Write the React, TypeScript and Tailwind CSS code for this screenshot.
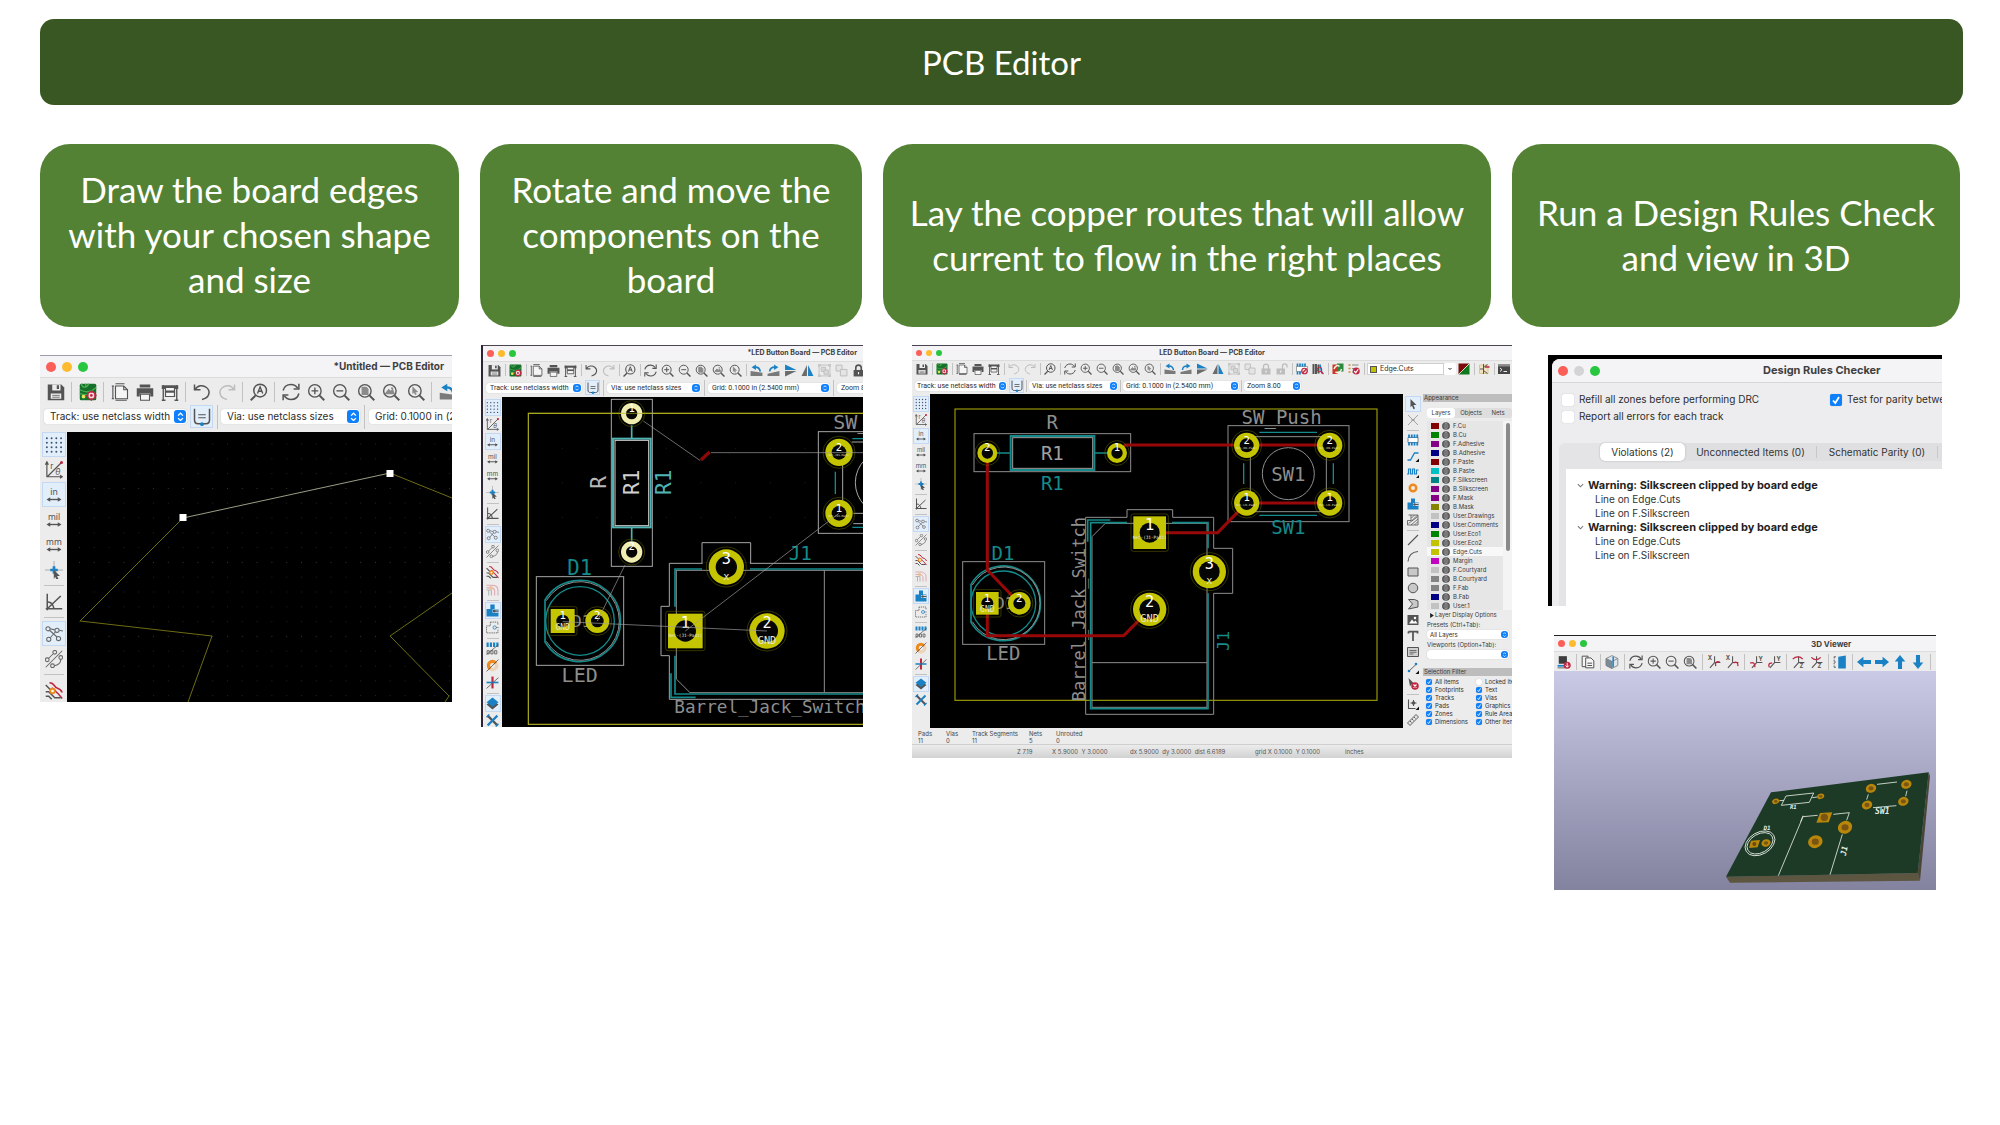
import React from "react";

/* ---------- icons (24 x 24 grid) ---------- */

const D = "#545454";
const L = "#bdbdbd";
const B = "#1a81c4";
const R = "#bf2641";

function magnifier(inner: React.ReactNode) {
  return (
    <g fill="none" stroke={D} strokeWidth="1.8">
      <circle cx="10.5" cy="10.5" r="8.3" />
      <path d="M16.5 16.5L23 23" strokeWidth="2.6" />
      {inner}
    </g>
  );
}

function unitIcon(t: string) {
  return (
    <g>
      <text x="12" y="12" textAnchor="middle" fontSize="12" fontFamily="Inter, sans-serif" fill={D}>{t}</text>
      <path d="M4 18h16" stroke={D} strokeWidth="1.8" />
      <path d="M2 18l5-3v6zM22 18l-5-3v6z" fill={D} />
    </g>
  );
}

function axisIcon(t: string, tx: number, ty: number, arc: string) {
  return (
    <g fill="none">
      <path d="M13 2v11h10M13 13l-8 9" stroke={D} strokeWidth="1.8" />
      <path d={arc} stroke={R} strokeWidth="2.2" />
      <text x={tx} y={ty} textAnchor="middle" fontSize="10" fontWeight="700" fontFamily="Inter, sans-serif" fill={D}>{t}</text>
    </g>
  );
}

const ICONS: Record<string, React.ReactNode> = {
  save: (
    <g>
      <path d="M1 2h18l4 4v17H1z" fill={D} />
      <path d="M7 2h11v8H7z" fill="#ececec" />
      <path d="M13 3h3v5h-3z" fill={D} />
      <path d="M5 14h14v7H5z" fill="#ececec" />
      <path d="M7 16.500h10M7 19h10" stroke={D} />
    </g>
  ),
  board: (
    <g>
      <rect x="1" y="1" width="22" height="22" rx="2" fill="#14702b" />
      <path d="M3 1c2 7 8 5 10 0M1 9c8 4 14 4 22-3M1 14c5 2 8 2 11 1M9 1v4" stroke="#4dae52" strokeWidth="1.700" fill="none" />
      <circle cx="6" cy="18" r="2.500" fill="#e6e25a" />
      <circle cx="16.500" cy="16.500" r="5" fill="#f3dede" stroke={R} strokeWidth="2" />
      <circle cx="16.500" cy="16.500" r="1.800" fill={R} />
      <path d="M16.500 9.500v3M16.500 20.500v3M9.500 16.500h3M20.500 16.500h3" stroke={R} strokeWidth="2" />
    </g>
  ),
  page: (
    <g fill="none" stroke={D} strokeWidth="1.500">
      <path d="M6 4h11l5 5v12H6z" fill="#f5f5f5" />
      <path d="M17 4v5h5M2.500 4v17M1 4h3M1 21h3M6 1h12M6 23h15" />
    </g>
  ),
  print: (
    <g fill={D}>
      <path d="M5 2h14v4H5zM1 7h22v11h-4v-4H5v4H1z" />
      <path d="M6 15h12v8H6z" fill="#f5f5f5" stroke={D} strokeWidth="1.400" />
    </g>
  ),
  plot: (
    <g fill={D}>
      <path d="M1 3h22v5H1z" />
      <path d="M3 3v20M21 3v20M1 23h5M18 23h5" stroke={D} strokeWidth="1.800" />
      <path d="M6 6h12v12H6z" fill="#f5f5f5" stroke={D} strokeWidth="1.600" />
      <path d="M6 10h12v3H6z" />
    </g>
  ),
  undo: <path d="M2 2v7h8M2.500 9C6 3 13 2 18 6c6 5 4 14-6 16" fill="none" stroke={D} strokeWidth="2" />,
  undoOff: <path d="M2 2v7h8M2.500 9C6 3 13 2 18 6c6 5 4 14-6 16" fill="none" stroke={L} strokeWidth="2" />,
  redo: <path d="M22 2v7h-8M21.500 9C18 3 11 2 6 6c-6 5-4 14 6 16" fill="none" stroke={L} strokeWidth="2" />,
  find: (
    <g fill="none" stroke={D} strokeWidth="2">
      <circle cx="13.500" cy="10" r="8.500" />
      <path d="M7.500 16.500L1 23" strokeWidth="2.600" />
      <path d="M10 14l3.500-9 3.500 9M11 11h5" strokeWidth="1.800" />
    </g>
  ),
  refresh: (
    <g fill="none" stroke={D} strokeWidth="2">
      <path d="M1.500 10C3 4 8 2 12 2c4 0 7 2 9 5M22.500 14C21 20 16 22 12 22c-4 0-7-2-9-5" />
      <path d="M22.500 1v7h-7M1.500 23v-7h7" />
    </g>
  ),
  zin: magnifier(<path d="M6 10.500h9M10.500 6v9" />),
  zout: magnifier(<path d="M6 10.500h9" />),
  zfit: magnifier(<path d="M7 6h5l2.500 2.500V15H7z" fill="#8a8a8a" stroke="#8a8a8a" />),
  zobj: magnifier(<path d="M5 14l4-5 2.500 2.500L14 9l2 5zM12 7h3" fill="#8a8a8a" stroke="#8a8a8a" />),
  zsel: magnifier(<path d="M7.500 5l7 7h-3.500l1.500 3-1.500.5-1.500-3L7.500 14z" fill="#8a8a8a" stroke="#8a8a8a" strokeWidth=".6" />),
  rotl: (
    <g>
      <path d="M1 22h22V16L1 13z" fill="#7a7a7a" />
      <path d="M8 6c6-1 10 2 11 8" fill="none" stroke={B} strokeWidth="3" />
      <path d="M3 6l8-5v10z" fill={B} />
    </g>
  ),
  rotr: (
    <g>
      <path d="M1 22h22V13L1 18z" fill="#7a7a7a" />
      <path d="M5 14c0-6 5-9 11-8" fill="none" stroke={B} strokeWidth="3" />
      <path d="M21 6l-8-5v10z" fill={B} />
    </g>
  ),
  flip: (
    <g>
      <path d="M2 1l21 10H2z" fill={B} />
      <path d="M2 23l21-10H2z" fill="#6b6b6b" />
    </g>
  ),
  mirror: (
    <g>
      <path d="M11 2v20H1z" fill="#6b6b6b" />
      <path d="M13 2v20h10z" fill={B} />
    </g>
  ),
  group: (
    <g fill="#d8d8d8" stroke={L} strokeWidth="1.600">
      <path d="M2 2h20v20H2z" fill="none" />
      <path d="M6 6h8v8H6z" /><path d="M11 11h8v8h-8z" />
      <path d="M0 0h4v4H0zM20 0h4v4h-4zM0 20h4v4H0zM20 20h4v4h-4z" />
    </g>
  ),
  ungroup: (
    <g fill="#e4e4e4" stroke={L} strokeWidth="1.800">
      <path d="M2 2h11v11H2z" /><path d="M10 10h12v12H10z" />
    </g>
  ),
  lock: (
    <g>
      <path d="M7 12V7a5 5 0 0110 0v5" fill="none" stroke={L} strokeWidth="2.500" />
      <path d="M3 11h18v12H3z" fill={L} /><path d="M12 15v4" stroke="#fff" strokeWidth="2" />
    </g>
  ),
  lockOn: (
    <g>
      <path d="M7 12V7a5 5 0 0110 0v5" fill="none" stroke={D} strokeWidth="3" />
      <path d="M3 11h18v12H3z" fill={D} /><path d="M12 15v4" stroke="#fff" strokeWidth="2" />
    </g>
  ),
  unlock: (
    <g>
      <path d="M13 12V6a4.500 4.500 0 019 0v3" fill="none" stroke={L} strokeWidth="2.500" />
      <path d="M1 11h17v12H1z" fill={L} /><path d="M9.500 15v4" stroke="#fff" strokeWidth="2" />
    </g>
  ),
  footprint: (
    <g>
      <path d="M1 7h22v10H1z" fill="#fff" stroke={D} />
      <path d="M3 1v6M8 1v6M13 1v6M18 1v6M3 17v6M8 17v6" stroke={B} strokeWidth="3.400" />
      <circle cx="17" cy="16" r="5.500" fill="#f7dcdc" stroke={R} strokeWidth="2.400" />
      <path d="M13.500 19.500l7-7" stroke={R} strokeWidth="2.400" />
    </g>
  ),
  library: (
    <g>
      <path d="M3 2v20M8 2v20M13 3v18" stroke={D} strokeWidth="4" />
      <path d="M16 3l4 18" stroke={B} strokeWidth="3" />
      <circle cx="15" cy="13" r="4.500" fill="none" stroke={R} strokeWidth="2" />
      <path d="M18 17l5 5" stroke={R} strokeWidth="2.500" />
    </g>
  ),
  sync: (
    <g>
      <path d="M1 3h10v19H1z" fill="#c9382b" /><path d="M10 1h13v16H10z" fill="#2c8a3f" />
      <path d="M4 12c3-8 8-8 11-5M19 12c-1 6-7 9-12 6" stroke="#f4f4e4" strokeWidth="3" fill="none" />
    </g>
  ),
  drc: (
    <g>
      <path d="M1 4h4M1 11h4M1 18h4" stroke="#d28c2a" strokeWidth="3" />
      <path d="M8 4h13M8 11h6M8 18h3" stroke="#8a8a8a" strokeWidth="2" />
      <circle cx="16.500" cy="16" r="7" fill={R} />
      <path d="M12.500 16l3 3.500 5-7" stroke="#fff" strokeWidth="2.400" fill="none" />
    </g>
  ),
  pair: (
    <g>
      <path d="M1 1h22L1 23z" fill="#7d0a0a" /><path d="M23 1v22H1z" fill="#0f7a1c" />
      <path d="M23 1L1 23" stroke="#fff" strokeWidth="1.500" />
    </g>
  ),
  schematic: (
    <g fill="none" stroke={D} strokeWidth="2">
      <path d="M3 4h17v17H3z" fill="#f2e4c0" stroke="#d9c690" />
      <path d="M11 2v20M4 12h7M11 9l8-6M11 15l8 6" /><path d="M14 8h9" stroke={R} strokeWidth="3" />
    </g>
  ),
  console: (
    <g>
      <path d="M0 3h24v19H0z" fill="#464646" /><path d="M0 3h24v4H0z" fill="#8a8a8a" />
      <path d="M4 10l4 3.500L4 17M11 17h7" stroke="#fff" strokeWidth="1.800" fill="none" />
    </g>
  ),
  track: (
    <g fill="none">
      <path d="M2 1v15c0 4 2 5 5 5h10c3 0 5-1 5-5V1" stroke={D} strokeWidth="2" />
      <path d="M7 9h10M7 13h10" stroke={D} strokeWidth="1.600" /><circle cx="12" cy="21.500" r="2.500" fill={B} />
    </g>
  ),
  /* left tool column */
  grid: (
    <g stroke="#3c5374" strokeWidth="2.600" strokeLinecap="round" strokeDasharray="0 6.300">
      <path d="M2.500 3h20M2.500 9h20M2.500 15h20M2.500 21h20" />
    </g>
  ),
  polar: (
    <g fill="none" stroke={D} strokeWidth="1.600">
      <path d="M2.500 2v19H23M0.500 5l2-4 2 4M20 19l3 2-3 2M3 21L22 2" />
      <circle cx="22" cy="2" r="2" fill={R} stroke="none" />
      <text x="9" y="10" textAnchor="middle" fontSize="11" fontFamily="Inter, sans-serif" fill={D} stroke="none">r</text>
      <text x="17" y="18" textAnchor="middle" fontSize="11" fontStyle="italic" fontFamily="Inter, sans-serif" fill={D} stroke="none">θ</text>
    </g>
  ),
  inch: unitIcon("in"),
  mil: unitIcon("mil"),
  mm: unitIcon("mm"),
  cursor: (
    <g>
      <path d="M12 0v24M0 12h24" stroke="#9a9a9a" />
      <path d="M12 7v10M7 12h10" stroke={B} strokeWidth="3.600" />
      <path d="M12 12l8 8h-4l2 4-2.500 1-2-4-1.500 2z" fill={D} />
    </g>
  ),
  angle: <path d="M3 1v22M1 21h22M3 21L21 4M4 12c4 0 7 4 8 9" fill="none" stroke={D} strokeWidth="2" />,
  rats: (
    <g fill="none" stroke="#686868" strokeWidth="1.400">
      <circle cx="4" cy="5" r="2.800" /><circle cx="16" cy="7" r="2.800" /><circle cx="5" cy="19" r="2.800" /><circle cx="18" cy="18" r="2.800" />
      <path d="M7 5l6 1.500M19 7l5 1M14 9l-7 8M6 7l10 9" />
    </g>
  ),
  ratsCurve: (
    <g fill="none" stroke="#686868" strokeWidth="1.400">
      <circle cx="3" cy="13" r="2.500" /><circle cx="13" cy="3" r="2.500" /><circle cx="10" cy="21" r="2.500" /><circle cx="21" cy="10" r="2.500" />
      <path d="M5 11l6-6M12 21c6-1 9-4 9-8M1 23L23 1" />
    </g>
  ),
  tracks: (
    <g fill="none" strokeWidth="2">
      <path d="M6 1c7 0 6 6 10 7s5 2 7 6M9 8c5 1 4 5 8 7l6 7" stroke={R} />
      <path d="M1 4l8 8M1 13h4l8 8h8M1 19h4l4 4" stroke={D} />
      <circle cx="10" cy="12" r="3" fill="#fff" stroke="#ee8a1c" strokeWidth="2.400" />
    </g>
  ),
  fade: (
    <g fill="none" strokeWidth="2">
      <path d="M1 4h9c8 0 12 4 12 9v10M1 9h7c5 0 8 2 8 6v8" stroke="#e0a8b2" />
      <path d="M5 13v10M10 13v10M1 13h9" stroke="#b4b4b4" /><circle cx="9" cy="9" r="2.500" stroke="#f0c090" />
    </g>
  ),
  zone: (
    <g>
      <path d="M8 1h8v8h7v14H1V9h7z" fill={B} />
      <path d="M12 10h11v6H12z" fill="#e6f0fa" /><circle cx="15" cy="13" r="2.600" fill={D} /><path d="M15 13h8" stroke={D} strokeWidth="2.500" />
    </g>
  ),
  zoneOff: (
    <g fill="none" stroke={D} strokeWidth="1.500" strokeDasharray="2.500 1.500">
      <path d="M8 2h14v6M8 2v7H1v13h21v-6" /><circle cx="16" cy="12" r="3" strokeDasharray="none" stroke={B} /><path d="M19 12h5" />
    </g>
  ),
  pads: (
    <g>
      <path d="M3 1v8M9 1v8M15 1v8M21 1v8" stroke={B} strokeWidth="4" />
      <path d="M2 16h4v6H2zM9 16h4v6H9zM16 16h4v6h-4z" stroke={D} fill="none" strokeWidth="1.500" /><path d="M1 23L23 5" stroke={D} strokeWidth="1.500" />
    </g>
  ),
  via: (
    <g fill="none">
      <circle cx="12" cy="12" r="7.500" stroke="#ee8a1c" strokeWidth="6" /><path d="M23 3L3 23h18z" fill="#ececec" opacity=".75" />
      <path d="M1 23L23 1" stroke={D} strokeWidth="1.500" />
    </g>
  ),
  cross: (
    <g>
      <path d="M12 1v22" stroke={R} strokeWidth="4" /><path d="M1 12h22" stroke={B} strokeWidth="3" /><path d="M1 23L23 3" stroke={D} strokeWidth="1.500" />
    </g>
  ),
  layers: (
    <g>
      <path d="M12 6l11 8-11 9-11-9z" fill={D} /><path d="M12 1l11 8.500L12 18 1 9.500z" fill={B} />
    </g>
  ),
  tools: (
    <g>
      <path d="M3 3l18 18" stroke={D} strokeWidth="4" /><path d="M21 3L3 21" stroke={B} strokeWidth="4" />
      <path d="M1 6l5-5M18 23l5-5" stroke={B} strokeWidth="3" />
    </g>
  ),
  /* right tool column */
  arrow: <path d="M7 2l12 12h-6l3 7-3 1.500-3-7-3 3z" fill={D} />,
  localRats: <path d="M2 2l20 20M22 2L2 22M8 12h8" stroke="#9a9a9a" strokeWidth="1.800" fill="none" />,
  chip: (
    <g>
      <path d="M2 7h20v10H2z" fill="#fff" stroke={D} strokeWidth="1.500" />
      <path d="M4 1v7M9.500 1v7M15 1v7M20.500 1v7M4 16v7M9.500 16v7M15 16v7M20.500 16v7" stroke={B} strokeWidth="3.600" />
    </g>
  ),
  route: (
    <g><path d="M1 20h6l8-14h8" stroke={B} strokeWidth="2.600" fill="none" /><path d="M24 17v7h-7z" fill="#111" /></g>
  ),
  tune: (
    <g><path d="M0 16h3V6h4v10h4V6h4v10h4V8h4" stroke={B} strokeWidth="2.400" fill="none" /><path d="M24 18v6h-6z" fill="#111" /></g>
  ),
  viaAdd: <circle cx="12" cy="12" r="6.500" fill="none" stroke="#ee8a1c" strokeWidth="5" />,
  rule: (
    <g stroke={D} strokeWidth="1.600" fill="none"><path d="M3 2h19v20H1v-9h7V2M9 8l6-6M9 14L21 2M3 19L22 5M8 22l14-12M15 22l7-7" /></g>
  ),
  line: <path d="M2 22L22 2" stroke={D} strokeWidth="2.200" />,
  arc: <path d="M2 23C3 12 10 4 22 3" fill="none" stroke={D} strokeWidth="2.200" />,
  rect: <path d="M2 4h20v16H2z" fill="#c8c8c8" stroke={D} strokeWidth="2" />,
  circle: <circle cx="12" cy="12" r="9.500" fill="#c8c8c8" stroke={D} strokeWidth="2" />,
  poly: <path d="M3 3h12l7 3v12L3 22l8-10z" fill="#c8c8c8" stroke={D} strokeWidth="2" />,
  image: (
    <g><path d="M1 2h22v20H1z" fill={D} /><path d="M4 19l6-8 4 5 3-3 4 6z" fill="#fff" /><circle cx="16" cy="8" r="2.500" fill="#fff" /></g>
  ),
  text: <path d="M3 3h18v4M12 3v19M3 7V3" fill="none" stroke={D} strokeWidth="3.500" />,
  textbox: (
    <g><path d="M1 3h22v18H1z" fill="#d0d0d0" stroke={D} strokeWidth="2" /><path d="M5 9h14M5 12.500h14M5 16h8" stroke={D} strokeWidth="1.600" /></g>
  ),
  dim: (
    <g><path d="M3 19L19 4" stroke={D} strokeWidth="1.800" /><circle cx="4" cy="18" r="2.600" fill={B} /><circle cx="18" cy="4" r="2.600" fill={B} /><path d="M24 17v7h-7z" fill="#111" /></g>
  ),
  del: (
    <g><path d="M3 0l12 12-6 .5L6 17z" fill={D} /><circle cx="16" cy="16" r="7.500" fill={R} /><path d="M13 13l6 6M19 13l-6 6" stroke="#fff" strokeWidth="2.200" /></g>
  ),
  origin: (
    <g><path d="M3 3v18h14M13 4v12M7 10h12" stroke={D} strokeWidth="2.200" fill="none" /><circle cx="13" cy="10" r="3.500" fill={D} /><path d="M24 17v7h-7z" fill="#111" /></g>
  ),
  measure: <path d="M1 18L18 1l5 5L6 23zM6 14l3 3M10 10l3 3M14 6l3 3" fill="#e2e2e2" stroke={D} strokeWidth="1.800" />,
  /* 3D viewer */
  chip3d: (
    <g>
      <path d="M3 2h14v13H3z" fill="#3d3d3d" /><path d="M1 17h16v3H1z" fill={B} /><path d="M1 21h14v2H1z" fill="#7a7a7a" />
      <circle cx="17.500" cy="17.500" r="6" fill={R} /><path d="M17.500 13.500v7M14.500 18l3 3 3-3" stroke="#fff" strokeWidth="1.600" fill="none" />
    </g>
  ),
  copy: (
    <g fill="#f5f5f5" stroke={D} strokeWidth="1.700">
      <path d="M2 2h10v18H2z" /><path d="M8 5h9l5 5v12H8z" /><path d="M11 14h8M11 18h8" />
    </g>
  ),
  cube: (
    <g stroke="#7a7a7a" strokeWidth="1.400">
      <path d="M12 1l10 5v12l-10 5L2 18V6z" fill="#dde6ec" /><path d="M2 6l10 5v12L2 18z" fill="#7a8c98" /><path d="M12 11l10-5" fill="none" />
      <path d="M14 3v18" stroke={B} strokeWidth="2.500" />
    </g>
  ),
  xcw: axisIcon("X", 5, 9, "M15 19c-2-6 2-9 7-7"),
  xccw: axisIcon("X", 5, 9, "M22 19c1-6-3-9-7-5"),
  ycw: axisIcon("Y", 20, 10, "M2 14c5-3 9 1 8 7"),
  yccw: axisIcon("Y", 20, 10, "M9 14c-6-1-7 3-5 7"),
  zcw: axisIcon("Z", 18, 23, "M3 7c5-5 13-5 17 0"),
  zccw: axisIcon("Z", 18, 23, "M4 4c5 5 11 5 16 0"),
  ortho: (
    <g><path d="M9 3l13-2v22H9z" fill={B} /><path d="M2 3h5M2 21h5M2 3v18M2 12h5" stroke={D} strokeWidth="1.600" strokeDasharray="3 2" fill="none" /></g>
  ),
  left: <path d="M0 12L11 3v5.500h13v7H11V21z" fill={B} />,
  right: <path d="M24 12L13 3v5.500H0v7h13V21z" fill={B} />,
  up: <path d="M12 0l9 11h-5.500v13h-7V11H3z" fill={B} />,
  down: <path d="M12 24l9-11h-5.500V0h-7v13H3z" fill={B} />,
};

type Size = "lg" | "md" | "sm" | "viewer";

const ICON_SIZE: Record<Size, string> = { lg: "size-[18px]", md: "size-[13px]", sm: "size-[12px]", viewer: "size-[14px]" };
const H_BOX: Record<Size, string> = { lg: "w-[25px] h-6", md: "w-[17px] h-4", sm: "w-4 h-4", viewer: "w-[18px] h-4" };
const V_BOX: Record<Size, string> = { lg: "h-[25px] w-6", md: "h-[17px] w-4", sm: "h-4 w-4", viewer: "h-4 w-4" };
const H_SEP: Record<Size, string> = { lg: "w-[7px] h-5", md: "w-1 h-3", sm: "w-1 h-3", viewer: "w-[6px] h-4" };
const V_SEP: Record<Size, string> = { lg: "h-[7px] w-5", md: "h-1 w-3", sm: "h-1 w-3", viewer: "h-1 w-3" };

function ToolIcon({ name, size }: { name: string; size: Size }) {
  return (
    <svg viewBox="0 0 24 24" className={`${ICON_SIZE[size]} shrink-0`} aria-hidden="true">{ICONS[name]}</svg>
  );
}

function Tools({ items, size, vertical, active = [] }: { items: string; size: Size; vertical?: boolean; active?: string[] }) {
  return (
    <div className={vertical ? "flex flex-col items-center" : "flex items-center"} role="toolbar">
      {items.split(" ").map((name, i) =>
        name === "|" ? (
          <span key={i} className={`flex shrink-0 items-center justify-center ${vertical ? V_SEP[size] : H_SEP[size]}`}>
            <span className={vertical ? "h-px w-full bg-[#c2c2c2]" : "h-full w-px bg-[#c2c2c2]"} />
          </span>
        ) : (
          <button
            key={i}
            type="button"
            aria-label={name}
            className={`flex shrink-0 items-center justify-center ${vertical ? V_BOX[size] : H_BOX[size]} ${active.includes(name) ? "border border-[#c3d9f3] bg-[#e3eefb]" : ""}`}
          >
            <ToolIcon name={name} size={size} />
          </button>
        )
      )}
    </div>
  );
}

/* ---------- shared window parts ---------- */

function Lights({ className, middle = "bg-[#fdbc2f]" }: { className: string; middle?: string }) {
  return (
    <div className={`absolute inset-y-0 flex items-center ${className}`}>
      <span className="aspect-square h-full rounded-full bg-[#fb5f57]" />
      <span className={`aspect-square h-full rounded-full ${middle}`} />
      <span className="aspect-square h-full rounded-full bg-[#28c73f]" />
    </div>
  );
}

function Picker({ label, className, text = "text-[10px]", knob = "w-3" }: { label: string; className: string; text?: string; knob?: string }) {
  return (
    <div className={`relative shrink-0 rounded-[3px] bg-white shadow-[0_0_1px_#aaa] ${className}`}>
      <select aria-label={label || "Viewport"} className={`block h-full w-full appearance-none bg-transparent text-[#2c2c2c] outline-none ${text}`}>
        <option>{label}</option>
      </select>
      <span className={`pointer-events-none absolute inset-y-px right-px flex items-center justify-center rounded-[3px] bg-[#0f80fb] ${knob}`}>
        <svg viewBox="0 0 10 12" className="h-3/4 w-3/4" fill="none" stroke="#fff" strokeWidth="1.600">
          <path d="M2 4.500L5 1.500l3 3M2 7.500l3 3 3-3" />
        </svg>
      </span>
    </div>
  );
}

function Check({ label, checked, box, text }: { label: string; checked?: boolean; box: string; text: string }) {
  return (
    <label className={`flex items-center whitespace-nowrap text-[#2c2c2c] ${text}`}>
      <span className={`relative shrink-0 ${box}`}>
        <input type="checkbox" defaultChecked={checked} className="peer block size-full appearance-none rounded-[2px] bg-white shadow-[0_0_1px_#aaa] checked:bg-[#0f80fb]" />
        <svg viewBox="0 0 12 12" className="pointer-events-none absolute inset-0 hidden size-full peer-checked:block" fill="none" stroke="#fff" strokeWidth="1.800">
          <path d="M3 6.500l2.300 2.500L9 3" />
        </svg>
      </span>
      {label}
    </label>
  );
}

/* ---------- PCB drawing primitives ---------- */

const YEL = "#c4c400";
const TEAL = "#158a8a";
const GRAY = "#8e8e8e";
const MONO = "'DejaVu Sans Mono', monospace";

function T({ x, y, s, fill, children, rot, anchor = "middle" }: { x: number; y: number; s: number; fill: string; children: string; rot?: boolean; anchor?: "middle" | "start" }) {
  return (
    <text x={x} y={y} fontSize={s} fill={fill} fontFamily={MONO} textAnchor={anchor} transform={rot ? `rotate(-90 ${x} ${y})` : undefined}>{children}</text>
  );
}

function Pad({ x, y, r, hole, n, net, square, fill = YEL }: { x: number; y: number; r: number; hole: number; n: string; net?: string; square?: boolean; fill?: string }) {
  const big = r > 45;
  return (
    <g>
      {square ? (
        <>
          <rect x={x - r - 7} y={y - r - 7} width={2 * r + 14} height={2 * r + 14} rx="7" fill="none" stroke="#6a6a00" strokeWidth="1.500" />
          <rect x={x - r} y={y - r} width={2 * r} height={2 * r} fill={fill} />
        </>
      ) : (
        <>
          <circle cx={x} cy={y} r={r + 7} fill="none" stroke="#6a6a00" strokeWidth="1.500" />
          <circle cx={x} cy={y} r={r} fill={fill} />
        </>
      )}
      <circle cx={x} cy={y} r={hole} fill="#050505" />
      <T x={x} y={y - (big ? 8 : 5)} s={big ? 46 : 32} fill="#fff">{n}</T>
      {net && <T x={x} y={y + (net.length > 4 ? (big ? 18 : 10) : big ? 38 : 27)} s={net.length > 4 ? (big ? 13 : 8) : net === "GND" && !big ? 24 : 31} fill="#e8e8c8">{net}</T>}
    </g>
  );
}

function RouteCanvas() {
  return (
    <svg viewBox="74 162 1419 1002" preserveAspectRatio="xMinYMin slice" className="h-[334px] min-w-0 flex-1 bg-black" fill="none">
      <rect x="149" y="207" width="1266" height="874" stroke="#9a9a08" strokeWidth="3.500" />
      <g stroke={GRAY} strokeWidth="3">
        <rect x="206" y="281" width="470" height="114" />
        <rect x="968" y="257" width="363" height="288" />
        <rect x="1035" y="290" width="228" height="225" />
        <circle cx="1149" cy="401" r="78" />
        <rect x="172" y="665" width="246" height="248" />
        <path d="M541 532H665V509H802V532H925V625H982V760H925V1123H541Z" />
        <path d="M560 590L600 550H905V1102H560ZM560 968H905" />
      </g>
      <g stroke={TEAL} strokeWidth="5">
        <rect x="316" y="288" width="251" height="102" strokeWidth="6" />
        <path d="M275 339H316M567 339H605" strokeWidth="4" />
        <path d="M1062 277H1235M1062 526H1235M1015 370V432M1284 370V432" strokeWidth="4" />
        <path d="M197 733A112 112 0 1 1 197 847Z" />
        <circle cx="294" cy="790" r="97" strokeWidth="4" />
        <path d="M547 605V540H615M665 548H556V1106H908V760M800 548H908V625" />
      </g>
      <rect x="322" y="293" width="240" height="92" stroke="#a0a0a0" strokeWidth="3" />
      <path d="M201 735A109 109 0 1 1 201 845" stroke={GRAY} strokeWidth="3" />
      <T x={441} y={267} s={57} fill={GRAY}>R</T>
      <T x={441} y={359} s={57} fill="#a0a0a0">R1</T>
      <T x={441} y={450} s={57} fill={TEAL}>R1</T>
      <T x={1129} y={251} s={57} fill={GRAY}>SW_Push</T>
      <T x={1149} y={422} s={57} fill={GRAY}>SW1</T>
      <T x={1149} y={583} s={57} fill={TEAL}>SW1</T>
      <T x={293} y={660} s={57} fill={TEAL}>D1</T>
      <T x={298} y={808} s={50} fill={GRAY}>D1</T>
      <T x={294} y={961} s={57} fill={GRAY}>LED</T>
      <T x={539} y={1084} s={51} fill={GRAY} rot anchor="start">Barrel_Jack_Switch</T>
      <T x={971} y={903} s={50} fill={TEAL} rot>J1</T>
      <g stroke="#990808" strokeWidth="9" strokeLinejoin="round">
        <path d="M640 335L660 315H1273M1024 489H1273M733 578H937L1024 489M246 339V690L342 790M246 790V887H655L733 809" />
      </g>
      <Pad x={246} y={339} r={30} hole={17} n="2" />
      <Pad x={635} y={339} r={30} hole={17} n="1" />
      <Pad x={1024} y={316} r={38} hole={21} n="2" net="Net-(D1-Pad2)" />
      <Pad x={1273} y={316} r={38} hole={21} n="2" net="Net-(D1-Pad2)" />
      <Pad x={1024} y={489} r={38} hole={21} n="1" net="Net-(J1-Pad1)" />
      <Pad x={1273} y={489} r={38} hole={21} n="1" net="Net-(J1-Pad1)" />
      <Pad x={246} y={790} r={34} hole={18} n="1" net="GND" square />
      <Pad x={342} y={790} r={34} hole={18} n="2" />
      <Pad x={733} y={578} r={49} hole={30} n="1" net="Net-(J1-Pad1)" square />
      <Pad x={733} y={808} r={50} hole={31} n="2" net="GND" />
      <Pad x={912} y={695} r={50} hole={31} n="3" net="x" />
    </svg>
  );
}

function PlaceCanvas() {
  const pale = "#efedaf";
  return (
    <svg viewBox="81 171 1083 990" preserveAspectRatio="xMinYMin slice" className="h-[330px] min-w-0 flex-1 bg-black" fill="none">
      <g fill="#262626">
        {[262, 366, 470, 574, 678, 782, 886, 990].map((x) => [325, 428, 532].map((y) => <circle key={`${x}-${y}`} cx={x} cy={y} r="1.500" />))}
      </g>
      <rect x="160" y="220" width="1200" height="933" stroke="#b0b020" strokeWidth="3.500" />
      <g stroke="#a6a6a6" strokeWidth="3">
        <rect x="409" y="178" width="123" height="501" />
        <rect x="1030" y="275" width="300" height="305" />
        <path d="M1130 306H1200M1103 375V482M1135 520H1200M1135 551H1200" />
        <circle cx="1238" cy="428" r="97" />
        <rect x="184" y="710" width="262" height="266" />
        <path d="M1180 670H583V799H558V947H583V1078H1180M681 670V608H827V670" />
        <path d="M604 690V1017L645 1058H1180M604 691H1180M1048 691V1058" stroke={GRAY} />
      </g>
      <path d="M683 670H825" stroke="#000" strokeWidth="5" />
      <g stroke={TEAL} strokeWidth="5">
        <rect x="414" y="296" width="113" height="266" stroke="#4fb3b3" strokeWidth="6" />
        <path d="M470 256V296M470 562V602" stroke="#4fb3b3" strokeWidth="5" />
        <path d="M1132 296H1200M1132 562H1200M1081 395V462" strokeWidth="4" />
        <path d="M210 780A122 122 0 1 1 210 906Z" />
        <circle cx="315" cy="843" r="103" strokeWidth="4" />
        <path d="M681 687H600V800M825 687H1180M600 947V1062H1180M588 1000V1072H662" />
      </g>
      <path d="M214 782A118 118 0 1 1 214 904" stroke={GRAY} strokeWidth="3" />
      <rect x="420" y="301" width="101" height="256" stroke="#d4d4d4" strokeWidth="3" />
      <T x={394} y={427} s={63} fill="#b8b8b8" rot>R</T>
      <T x={491} y={427} s={63} fill="#d0d0d0" rot>R1</T>
      <T x={588} y={427} s={63} fill="#4fb3b3" rot>R1</T>
      <T x={1075} y={267} s={60} fill={GRAY} anchor="start">SW_Push</T>
      <T x={314} y={704} s={62} fill={TEAL}>D1</T>
      <T x={320} y={860} s={50} fill={GRAY}>D1</T>
      <T x={314} y={1026} s={60} fill={GRAY}>LED</T>
      <T x={976} y={661} s={58} fill={TEAL}>J1</T>
      <T x={598} y={1120} s={53} fill={GRAY} anchor="start">Barrel_Jack_Switch</T>
      <Pad x={470} y={221} r={32} hole={17} n="1" fill={pale} />
      <Pad x={470} y={636} r={32} hole={17} n="2" fill={pale} />
      <Pad x={1092} y={337} r={41} hole={22} n="2" net="Net-(D1-Pad2)" />
      <Pad x={1092} y={520} r={41} hole={22} n="1" net="Net-(J1-Pad1)" />
      <Pad x={263} y={843} r={36} hole={19} n="1" net="GND" square />
      <Pad x={367} y={843} r={36} hole={19} n="2" />
      <Pad x={754} y={681} r={53} hole={32} n="3" net="x" />
      <Pad x={631} y={873} r={52} hole={32} n="1" net="Net-(J1-Pad1)" square />
      <Pad x={876} y={873} r={53} hole={33} n="2" net="GND" />
      <path d="M505 243L676 362M708 338H1180M1092 520L631 873M450 675L367 843M263 845L876 873" stroke="#a0a0a0" strokeWidth="2" />
      <path d="M160 220H1180" stroke="#b0b020" strokeWidth="2" />
      <path d="M678 360L704 336" stroke="#8e0808" strokeWidth="10" />
    </svg>
  );
}

function OutlineCanvas() {
  return (
    <svg viewBox="0 0 385 270" preserveAspectRatio="xMinYMin slice" className="h-[270px] min-w-0 flex-1 bg-black" fill="none">
      {Array.from({ length: 18 }, (_, r) => (
        <path key={r} d={`M12 ${12 + r * 14.8}H385`} stroke={r % 5 === 3 ? "#383838" : "#242424"} strokeDasharray="1 13.800" />
      ))}
      <path d="M323 41L385 66M116 86L13 189L145 204L121 270M385 161L323 204L382 264L378 270" stroke="#6d6d14" />
      <path d="M116 86L323 41" stroke="#9c9c86" />
      <path d="M112.500 82h7v7h-7zM319.500 38h7v7h-7z" fill="#fff" />
    </svg>
  );
}

function BoardView() {
  const gold = "#b8860b";
  const pads: [number, number, number][] = [
    [707, 529, 10], [842, 514, 10], [993, 490, 15], [1099, 478, 15], [981, 540, 15], [1090, 529, 15], [678, 654, 13], [915, 607, 21], [826, 650, 21],
  ];
  return (
    <svg viewBox="42 138 1146 657" preserveAspectRatio="xMinYMin slice" className="block h-[219px] w-full bg-linear-to-b from-[#cac9e6] to-[#83829f]" fill="none">
      <path d="M558 755L1133 744L1140 767L570 773Z" fill="#5c5640" />
      <path d="M1166 442L1170 453L1140 767L1133 744Z" fill="#4a4534" />
      <path d="M693 502L1166 442L1133 744L558 755Z" fill="#1c3a25" />
      <g stroke="#e4ece4" strokeWidth="2.500">
        <path d="M738 513L821 504L808 532L724 541ZM718 527L732 526M817 518L832 516" />
        <path d="M1011 478L1071 471M999 548L1069 542M985 508L980 524M1101 497L1097 514" />
        <path d="M833 571L789 575L715 752M782 590L789 572M880 568L928 563L920 586M907 628L870 749" />
        <ellipse cx="660" cy="655" rx="48" ry="33" transform="rotate(-30 660 655)" />
        <ellipse cx="660" cy="655" rx="42" ry="28" transform="rotate(-30 660 655)" />
      </g>
      <path d="M633 647L660 645L653 667L627 669Z" fill={gold} />
      <circle cx="643" cy="657" r="6" fill="#6b4a10" />
      <path d="M840 564L877 562L866 592L829 593Z" fill={gold} />
      <circle cx="853" cy="577" r="11" fill="#7a5412" />
      {pads.map(([x, y, r]) => (
        <g key={`${x}-${y}`}>
          <ellipse cx={x} cy={y} rx={r + 1} ry={r - 2} fill={gold} transform={`rotate(-20 ${x} ${y})`} />
          <ellipse cx={x} cy={y} rx={r / 2} ry={r / 2 - 1} fill="#7a5412" />
        </g>
      ))}
      <g fontFamily={MONO} fontStyle="italic" fontWeight="700" fill="#e4ece4" textAnchor="middle">
        <text x="760" y="552" fontSize="17">R1</text>
        <text x="681" y="616" fontSize="18">D1</text>
        <text x="1027" y="566" fontSize="24">SW1</text>
        <text x="920" y="679" fontSize="24" transform="rotate(-78 920 679)">J1</text>
      </g>
    </svg>
  );
}

/* ---------- windows ---------- */

const MAIN_ICONS = "save | board | page print plot | undo redo | find | refresh zin zout zfit zobj zsel | rotl";
const SMALL_TEXT = "text-[7px] font-[Roboto,sans-serif]";

function OutlineWindow() {
  return (
    <section className="mt-[10px] overflow-hidden bg-[#ececec] font-[Inter,sans-serif]" aria-label="Untitled board">
      <div className="h-px bg-[#9f9cab]" />
      <header className="relative flex h-[22px] items-center justify-end border-b border-[#dcdcdc] bg-[#f4f3f5] pr-2">
        <Lights className="left-[6px] my-auto h-[10px] gap-[6px]" />
        <h3 className="text-[10px] font-bold text-[#3f3f3f]">*Untitled — PCB Editor</h3>
      </header>
      <div className="flex h-[27px] items-center pl-[3px]">
        <Tools size="lg" items={MAIN_ICONS} />
      </div>
      <div className="flex h-[27px] items-center gap-[3px] pb-1 pl-1">
        <Picker label="Track: use netclass width" className="h-[15px] w-[143px] pl-[6px]" />
        <button type="button" aria-label="Track width from existing" className="flex h-[23px] w-[23px] shrink-0 items-center justify-center border border-[#c3d9f3] bg-[#e3eefb]"><ToolIcon name="track" size="lg" /></button>
        <span className="ml-px h-6 w-px shrink-0 bg-[#c2c2c2]" />
        <Picker label="Via: use netclass sizes" className="h-[15px] w-[139px] pl-[6px]" />
        <span className="ml-px h-6 w-px shrink-0 bg-[#c2c2c2]" />
        <Picker label="Grid: 0.1000 in (2.5400 mm)" className="ml-px h-[15px] w-[180px] pl-[6px]" />
      </div>
      <div className="flex h-[270px]">
        <div className="w-[27px] shrink-0 overflow-hidden pl-px">
          <Tools size="lg" vertical active={["grid", "inch", "rats"]} items="grid polar inch mil mm cursor | angle | rats ratsCurve | tracks" />
        </div>
        <OutlineCanvas />
      </div>
    </section>
  );
}

function PlaceWindow() {
  return (
    <section className="overflow-hidden border-l-2 border-[#2d2436] bg-[#ececec] font-[Inter,sans-serif]" aria-label="Component placement">
      <div className="h-px bg-[#4b4553]" />
      <header className="relative flex h-[15px] items-center justify-end bg-[#f4f3f5] pr-[6px]">
        <Lights className="left-1 my-auto h-[7px] gap-1" />
        <h3 className="text-[7px] font-bold text-[#3f3f3f]">*LED Button Board — PCB Editor</h3>
      </header>
      <div className="flex h-[17px] items-center border-t border-[#dcdcdc] pl-[3px]">
        <Tools size="md" items={`${MAIN_ICONS} rotr flip mirror group ungroup lockOn`} />
      </div>
      <div className="flex h-[19px] items-center gap-[3px] pl-[3px]">
        <Picker label="Track: use netclass width" className="h-[10px] w-[96px] pl-1" text={SMALL_TEXT} knob="w-2" />
        <button type="button" aria-label="Track width from existing" className="flex h-[15px] w-[15px] shrink-0 items-center justify-center border border-[#c3d9f3] bg-[#e3eefb]"><ToolIcon name="track" size="sm" /></button>
        <span className="h-4 w-px shrink-0 bg-[#c2c2c2]" />
        <Picker label="Via: use netclass sizes" className="h-[10px] w-[94px] pl-1" text={SMALL_TEXT} knob="w-2" />
        <span className="h-4 w-px shrink-0 bg-[#c2c2c2]" />
        <Picker label="Grid: 0.1000 in (2.5400 mm)" className="h-[10px] w-[122px] pl-1" text={SMALL_TEXT} knob="w-2" />
        <span className="h-4 w-px shrink-0 bg-[#c2c2c2]" />
        <Picker label="Zoom 8.00" className="h-[10px] w-[56px] pl-1" text={SMALL_TEXT} knob="w-2" />
      </div>
      <div className="flex h-[330px]">
        <div className="w-[19px] shrink-0 overflow-hidden pt-[2px]">
          <Tools size="md" vertical active={["grid", "inch", "rats", "zone", "layers"]} items="grid polar inch mil mm cursor | angle | rats ratsCurve | tracks fade | zone zoneOff | pads via cross | layers tools" />
        </div>
        <PlaceCanvas />
      </div>
    </section>
  );
}

const LAYERS: [string, string][] = [
  ["F.Cu", "bg-[#840000]"], ["B.Cu", "bg-[#008400]"], ["F.Adhesive", "bg-[#840084]"], ["B.Adhesive", "bg-[#000084]"],
  ["F.Paste", "bg-[#840000]"], ["B.Paste", "bg-[#00c2c2]"], ["F.Silkscreen", "bg-[#008484]"], ["B.Silkscreen", "bg-[#840084]"],
  ["F.Mask", "bg-[#840084]"], ["B.Mask", "bg-[#848400]"], ["User.Drawings", "bg-[#c2c2c2]"], ["User.Comments", "bg-[#000084]"],
  ["User.Eco1", "bg-[#008400]"], ["User.Eco2", "bg-[#c2c200]"], ["Edge.Cuts", "bg-[#c2c200]"], ["Margin", "bg-[#c200c2]"],
  ["F.Courtyard", "bg-[#c2c2c2]"], ["B.Courtyard", "bg-[#848484]"], ["F.Fab", "bg-[#848484]"], ["B.Fab", "bg-[#000084]"], ["User.1", "bg-[#c2c2c2]"],
];

function AppearancePanel() {
  return (
    <aside className="flex w-[89px] shrink-0 flex-col overflow-hidden text-[6px] leading-[8px] text-[#3a3a3a]">
      <h4 className="h-[8px] bg-[#bdbdbd] pl-px">Appearance</h4>
      <div className="mt-[6px] ml-1 flex h-[10px] items-center rounded-[3px] bg-[#dedede] text-center" role="tablist">
        <button type="button" role="tab" aria-selected="true" className="h-full w-7 rounded-[3px] bg-white">Layers</button>
        <button type="button" role="tab" aria-selected="false" className="h-full w-8">Objects</button>
        <button type="button" role="tab" aria-selected="false" className="h-full w-[22px]">Nets</button>
      </div>
      <div className="mt-[3px] ml-1 flex bg-[#e6e6e6]">
        <ul className="w-[76px]">
          {LAYERS.map(([name, swatch]) => (
            <li key={name} className={`flex h-[9px] items-center gap-[3px] pl-1 ${name === "Edge.Cuts" ? "bg-[#f8f8f8]" : ""}`}>
              <span className={`h-[6px] w-2 shrink-0 ${swatch}`} />
              <svg viewBox="0 0 12 12" className="size-2 shrink-0" fill="none" stroke={D} strokeWidth="2"><circle cx="6" cy="6" r="4.800" /><path d="M1 4.500h10M1 7.500h10" /></svg>
              {name}
            </li>
          ))}
        </ul>
        <div className="flex w-[9px] justify-center bg-[#f4f4f4]"><span className="mt-[2px] h-[128px] w-1 rounded-full bg-[#8a8a8a]" /></div>
      </div>
      <button type="button" className="mt-[1px] flex items-center pl-[7px] text-[6px]"><svg viewBox="0 0 6 8" className="mr-px h-[5px] w-1" fill="#222"><path d="M0 0l6 4-6 4z" /></svg>Layer Display Options</button>
      <span className="mt-[2px] pl-1">Presets (Ctrl+Tab):</span>
      <Picker label="All Layers" className="mt-px ml-1 h-[9px] w-[82px] pl-[3px]" text="text-[6px]" knob="w-[7px]" />
      <span className="mt-[2px] pl-1">Viewports (Option+Tab):</span>
      <Picker label="" className="mt-px ml-1 h-[9px] w-[82px] pl-[3px]" text="text-[6px]" knob="w-[7px]" />
      <h4 className="mt-[9px] h-[8px] shrink-0 bg-[#bdbdbd] pl-px">Selection Filter</h4>
      <div className="mt-[2px] grid shrink-0 grid-cols-[50px_60px] pl-[3px]">
        {["All items", "Locked items", "Footprints", "Text", "Tracks", "Vias", "Pads", "Graphics", "Zones", "Rule Areas", "Dimensions", "Other items"].map((t) => (
          <Check key={t} label={t} checked={t !== "Locked items"} box="mr-[3px] size-[6px]" text="h-2 text-[6px]" />
        ))}
      </div>
    </aside>
  );
}

function RouteWindow() {
  return (
    <section className="overflow-hidden bg-[#ececec] font-[Inter,sans-serif]" aria-label="Routed board">
      <div className="h-px bg-[#4b4553]" />
      <header className="relative flex h-[14px] items-center justify-center bg-[#f4f3f5]">
        <Lights className="left-1 my-auto h-[6px] gap-1" />
        <h3 className="text-[7px] font-bold text-[#3f3f3f]">LED Button Board — PCB Editor</h3>
      </header>
      <div className="flex h-[17px] items-center border-t border-[#dcdcdc] pl-[2px]">
        <Tools size="sm" items="save | board | page print plot | undoOff redo | find | refresh zin zout zfit zobj zsel | rotl rotr flip mirror group ungroup lock unlock | footprint library | sync drc |" />
        <div className="relative ml-px h-3 w-[77px] shrink-0 border border-[#cfcfcf] bg-white pl-3">
          <span className="pointer-events-none absolute top-[2px] left-[2px] size-[7px] border border-[#555] bg-[#c2c200]" />
          <select aria-label="Active layer" className="block h-full w-full appearance-none bg-transparent text-[7px] text-[#2c2c2c]"><option>Edge.Cuts</option></select>
        </div>
        <span className="flex h-3 w-3 shrink-0 items-center justify-center rounded-[2px] bg-white"><svg viewBox="0 0 8 8" className="size-1" fill="none" stroke="#333" strokeWidth="2"><path d="M1 2l3 3 3-3" /></svg></span>
        <Tools size="sm" items="pair | schematic | console" />
      </div>
      <div className="flex h-[17px] items-center gap-[2px] pl-[3px]">
        <Picker label="Track: use netclass width" className="h-[10px] w-[92px] pl-[2px]" text={SMALL_TEXT} knob="w-[7px]" />
        <button type="button" aria-label="Track width from existing" className="flex h-[15px] w-[15px] shrink-0 items-center justify-center border border-[#c3d9f3] bg-[#e3eefb]"><ToolIcon name="track" size="sm" /></button>
        <span className="h-3 w-px shrink-0 bg-[#c2c2c2]" />
        <Picker label="Via: use netclass sizes" className="h-[10px] w-[89px] pl-[3px]" text={SMALL_TEXT} knob="w-[7px]" />
        <span className="h-3 w-px shrink-0 bg-[#c2c2c2]" />
        <Picker label="Grid: 0.1000 in (2.5400 mm)" className="h-[10px] w-[116px] pl-[3px]" text={SMALL_TEXT} knob="w-[7px]" />
        <span className="h-3 w-px shrink-0 bg-[#c2c2c2]" />
        <Picker label="Zoom 8.00" className="h-[10px] w-[57px] pl-[3px]" text={SMALL_TEXT} knob="w-[7px]" />
      </div>
      <div className="flex h-[334px]">
        <div className="w-[18px] shrink-0 overflow-hidden pt-[2px]">
          <Tools size="sm" vertical active={["grid", "inch", "rats", "zone", "layers"]} items="grid polar inch mil mm cursor | angle | rats ratsCurve | tracks fade | zone zoneOff | pads via cross | layers tools" />
        </div>
        <RouteCanvas />
        <div className="flex w-5 shrink-0 flex-col overflow-hidden pt-[2px]">
          <Tools size="sm" vertical active={["arrow"]} items="arrow localRats | chip route tune viaAdd zone rule | line arc rect circle poly image text textbox dim del | origin measure" />
        </div>
        <AppearancePanel />
      </div>
      <dl className="grid h-[16px] grid-cols-[28px_26px_57px_27px_60px] pt-[2px] pl-[6px] text-[6px] leading-[7px] text-[#444]">
        {[["Pads", "11"], ["Vias", "0"], ["Track Segments", "11"], ["Nets", "5"], ["Unrouted", "0"]].map(([k, v]) => (
          <div key={k}><dt>{k}</dt><dd>{v}</dd></div>
        ))}
      </dl>
      <footer className="grid h-[14px] grid-cols-[35px_78px_125px_90px_1fr] items-center border-t border-[#cfcfcf] bg-linear-to-b from-[#ececec] to-[#d2d2d2] pl-[105px] text-[6px] whitespace-pre text-[#555]">
        <span>Z 7.19</span><span>X 5.9000  Y 3.0000</span><span>dx 5.9000  dy 3.0000  dist 6.6189</span><span>grid X 0.1000  Y 0.1000</span><span>inches</span>
      </footer>
    </section>
  );
}

function RulesWindow() {
  const group = (
    <li>
      <div className="flex items-center text-[11px] font-bold whitespace-nowrap text-[#1f1f1f]">
        <svg viewBox="0 0 8 8" className="mr-1 size-[7px]" fill="none" stroke="#777" strokeWidth="1.200"><path d="M1 2.500l3 3 3-3" /></svg>
        Warning: Silkscreen clipped by board edge
      </div>
      <div className="pl-[18px]">Line on Edge.Cuts</div>
      <div className="pl-[18px]">Line on F.Silkscreen</div>
    </li>
  );
  return (
    <section className="mt-[10px] overflow-hidden bg-black pt-1 pl-1 font-[Inter,sans-serif]" aria-label="Design Rules Checker">
      <div className="h-[247px] overflow-hidden rounded-tl-lg bg-[#ededef]">
        <header className="relative flex h-6 items-center border-b border-[#d6d6d8] bg-[#f4f3f5] pl-[211px]">
          <Lights className="left-[6px] my-auto h-[10px] gap-[6px]" middle="bg-[#d4d3d5]" />
          <h3 className="text-[11px] font-bold whitespace-nowrap text-[#3f3f3f]">Design Rules Checker</h3>
        </header>
        <div className="grid grid-cols-[268px_1fr] pt-2 pl-[10px]">
          <Check label="Refill all zones before performing DRC" box="mr-[5px] size-3" text="h-[17px] text-[10px]" />
          <Check label="Test for parity between PCB and schematic" checked box="mr-[5px] size-3" text="h-[17px] text-[10px]" />
          <Check label="Report all errors for each track" box="mr-[5px] size-3" text="h-[17px] text-[10px]" />
        </div>
        <div className="mt-6 ml-[7px] h-[175px] rounded-tl-md bg-[#e4e4e6] pl-[7px]">
          <div className="-mt-[6px] flex h-[18px] translate-y-0 items-center" role="tablist">
            <div className="mt-0 ml-[34px] flex h-[18px] w-[400px] shrink-0 items-center rounded-[5px] bg-[#dfdfe1] text-[10px] text-[#333]">
              <button type="button" role="tab" aria-selected="true" className="h-full w-[85px] shrink-0 rounded-[5px] bg-white shadow-[0_0_2px_#aaa]">Violations (2)</button>
              <button type="button" role="tab" aria-selected="false" className="h-full w-[131px] shrink-0">Unconnected Items (0)</button>
              <span className="h-3 w-px bg-[#c8c8c8]" />
              <button type="button" role="tab" aria-selected="false" className="h-full w-[120px] shrink-0">Schematic Parity (0)</button>
              <span className="h-3 w-px bg-[#c8c8c8]" />
            </div>
          </div>
          <ul className="mt-2 h-[145px] bg-white pt-[9px] pl-[11px] text-[10px] leading-[14px] text-[#333]">
            {group}
            {group}
          </ul>
        </div>
      </div>
    </section>
  );
}

function ViewerWindow() {
  return (
    <section className="mt-[29px] mr-[6px] ml-[6px] overflow-hidden bg-[#ececec] font-[Inter,sans-serif]" aria-label="3D Viewer">
      <div className="h-px bg-[#222]" />
      <header className="relative flex h-4 items-center border-b border-[#dcdcdc] bg-[#f4f3f5] pl-[257px]">
        <Lights className="left-1 my-auto h-[7px] gap-1" />
        <h3 className="text-[8px] font-bold whitespace-nowrap text-[#3f3f3f]">3D Viewer</h3>
      </header>
      <div className="flex h-[19px] items-center pl-px">
        <Tools size="viewer" items="chip3d | copy | cube | refresh zin zout zfit | xcw xccw | ycw yccw | zcw zccw | ortho | left right up down |" />
      </div>
      <BoardView />
    </section>
  );
}

/* ---------- page ---------- */

const STEPS = [
  "Draw the board edges with your chosen shape and size",
  "Rotate and move the components on the board",
  "Lay the copper routes that will allow current to flow in the right places",
  "Run a Design Rules Check and view in 3D",
];

export default function App() {
  return (
    <main className="min-h-screen bg-white pt-[19px] pr-[37px] pl-10 font-[Lato,sans-serif]">
      <h1 className="flex h-[86px] items-center justify-center rounded-[14px] bg-[#385723] text-[33px] leading-[45px] text-white">PCB Editor</h1>
      <div className="mt-[39px] mr-[3px] grid grid-cols-[419fr_382fr_608fr_448fr] gap-[21px]">
        {STEPS.map((s) => (
          <h2 key={s} className="flex h-[183px] min-w-0 items-center justify-center rounded-[30px] bg-[#548235] px-5 pb-[2px] text-center text-[35px] leading-[45px] text-white">{s}</h2>
        ))}
      </div>
      <div className="mt-[18px] mr-[21px] grid grid-cols-[441fr_431fr_636fr_394fr] items-start">
        <div className="mr-[29px] min-w-0"><OutlineWindow /></div>
        <div className="mr-[49px] min-w-0"><PlaceWindow /></div>
        <div className="mr-9 min-w-0"><RouteWindow /></div>
        <div className="min-w-0"><RulesWindow /><ViewerWindow /></div>
      </div>
    </main>
  );
}
